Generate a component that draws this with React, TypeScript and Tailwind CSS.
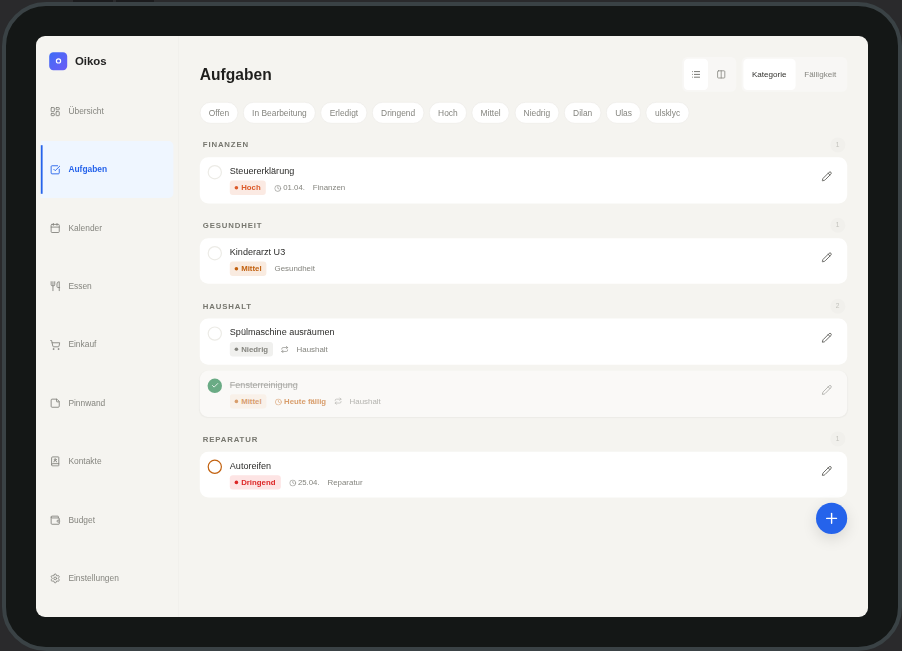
import React from "react";
import {
  LayoutDashboard, SquareCheckBig, Calendar, Utensils, ShoppingCart, StickyNote, BookUser, Wallet, Settings,
  Pencil, List, Columns2, Clock, Repeat, Check, Plus,
} from "lucide-react";

const nav = [
  { label: "Übersicht", Icon: LayoutDashboard },
  { label: "Aufgaben", Icon: SquareCheckBig, active: true },
  { label: "Kalender", Icon: Calendar },
  { label: "Essen", Icon: Utensils },
  { label: "Einkauf", Icon: ShoppingCart },
  { label: "Pinnwand", Icon: StickyNote },
  { label: "Kontakte", Icon: BookUser },
  { label: "Budget", Icon: Wallet },
  { label: "Einstellungen", Icon: Settings },
];

const chips = ["Offen", "In Bearbeitung", "Erledigt", "Dringend", "Hoch", "Mittel", "Niedrig", "Dilan", "Ulas", "ulsklyc"];

const prio: Record<string, { wrap: string; dot: string }> = {
  Hoch: { wrap: "bg-[#fbeae3] text-[#dc5a2a]", dot: "bg-[#dc5a2a]" },
  Mittel: { wrap: "bg-[#f9ebe0] text-[#c2610f]", dot: "bg-[#c2610f]" },
  Niedrig: { wrap: "bg-[#f0f0ee] text-[#85857f]", dot: "bg-[#85857f]" },
  Dringend: { wrap: "bg-[#fde4e4] text-[#dc2626]", dot: "bg-[#dc2626]" },
};

function Badge({ p }: { p: string }) {
  return (
    <span className={`flex h-[24px] items-center gap-[5px] rounded-[5px] pl-[8px] pr-[8.5px] text-[13px] font-bold ${prio[p].wrap}`}>
      <span className={`h-[6px] w-[6px] rounded-full ${prio[p].dot}`} />
      {p}
    </span>
  );
}

type Task = {
  title: string; p: string; date?: string; today?: boolean; repeat?: boolean; cat: string; done?: boolean; urgent?: boolean;
};

function Card({ t }: { t: Task }) {
  return (
    <div className={`flex h-[76.67px] rounded-[14px] pl-[13px] pr-[25px] pt-[13px] ${t.done ? "bg-[#faf9f7] shadow-[0_1px_2px_rgba(0,0,0,0.04)]" : "bg-white"}`}>
      {t.done ? (
        <span className="flex h-[24px] w-[24px] shrink-0 items-center justify-center rounded-full bg-[#6aab85]">
          <Check size={13} strokeWidth={2.5} className="text-white" />
        </span>
      ) : (
        <span className={`h-[24px] w-[24px] shrink-0 rounded-full ${t.urgent ? "border-[2px] border-[#c2610f]" : "border-[2px] border-[#ecebe6]"}`} />
      )}
      <div className="ml-[13px] flex-1">
        <div className={`text-[15.1px] leading-[20px] ${t.done ? "text-[#a8a8a4] line-through" : "text-[#2c2c2a]"}`}>{t.title}</div>
        <div className={`mt-[6px] flex items-center ${t.done ? "opacity-60" : ""}`}>
          <Badge p={t.p} />
          {t.date && (
            <span className="ml-[14px] flex items-center gap-[3px] text-[13px] text-[#85857f]">
              <Clock size={12} strokeWidth={2} className="mt-[2px]" />
              {t.date}
            </span>
          )}
          {t.today && (
            <span className="ml-[14px] flex items-center gap-[3px] text-[13px] font-bold text-[#c2610f]">
              <Clock size={12} strokeWidth={2} className="mt-[2px]" />
              Heute fällig
            </span>
          )}
          {t.repeat && <Repeat size={13} strokeWidth={2} className="ml-[13px] text-[#85857f]" />}
          <span className="ml-[13px] text-[13.2px] text-[#85857f]">{t.cat}</span>
        </div>
      </div>
      <Pencil size={18} strokeWidth={2} className={`mt-[10px] ${t.done ? "text-[#b0b0ac]" : "text-[#5c5c58]"}`} />
    </div>
  );
}

function Section({ name, count, tasks }: { name: string; count: number; tasks: Task[] }) {
  return (
    <section className="mt-[26px] first-of-type:mt-[24px]">
      <div className="flex h-[22px] items-center justify-between pl-[5px] pr-[3px]">
        <span className="text-[13px] font-bold tracking-[1.4px] text-[#77776f]">{name}</span>
        <span className="flex h-[25px] w-[25px] items-center justify-center rounded-full bg-[#f1f0ec] text-[11px] text-[#c2c2bc]">{count}</span>
      </div>
      <div className="mt-[10px] flex flex-col gap-[10px]">
        {tasks.map((t) => <Card key={t.title} t={t} />)}
      </div>
    </section>
  );
}

export default function App() {
  return (
    <div className="relative h-[651px] w-[902px] overflow-hidden bg-[#2a2a2c] font-['Liberation_Sans',sans-serif]">
      <span className="absolute left-[73px] top-0 h-[2px] w-[40px] bg-[#1b1b1d]" />
      <span className="absolute left-[116px] top-0 h-[2px] w-[38px] bg-[#1b1b1d]" />
      <div className="absolute left-[2px] top-[2px] h-[649px] w-[900px] rounded-[44px] border-[4px] border-[#3a4245] bg-[#141716] p-[30px]">
        <div className="h-[581px] w-[832px] overflow-hidden rounded-[9px] bg-[#f5f4f0]">
          <div className="relative flex h-[968.33px] w-[1386.67px] origin-top-left scale-[0.6]">
            <aside className="w-[238px] shrink-0 border-r border-[#eeede9]">
              <div className="flex items-center pl-[22px] pt-[27px]">
                <span className="flex h-[30px] w-[30px] items-center justify-center rounded-[7px] bg-gradient-to-br from-[#3b6cf6] to-[#6a5cf6]">
                  <span className="mb-[2px] h-[9px] w-[9px] rounded-full border-[2px] border-white" />
                </span>
                <span className="ml-[13px] text-[19px] font-bold text-[#222]">Oikos</span>
              </div>
              <nav className="mt-[21px] flex flex-col gap-[2.33px] px-[8px]">
                {nav.map(({ label, Icon, active }) => (
                  <div key={label} className={`relative flex h-[95px] items-center pl-[15px] ${active ? "rounded-r-[8px] bg-[#eff6ff] text-[#2563eb]" : "text-[#85857f]"}`}>
                    {active && <span className="absolute bottom-[7px] left-0 top-[7px] w-[3px] bg-[#2563eb]" />}
                    <Icon size={18} strokeWidth={2} />
                    <span className={`ml-[13px] text-[14px] ${active ? "font-bold" : ""}`}>{label}</span>
                  </div>
                ))}
              </nav>
            </aside>
            <main className="relative flex-1 px-[35px] pt-[35px]">
              <header className="flex h-[58px] items-center">
                <h1 className="flex-1 text-[26px] font-bold text-[#1f1f1d]">Aufgaben</h1>
                <div className="flex h-[58px] w-[90px] rounded-[9px] bg-[#f8f7f5] p-[3px]">
                  <span className="flex h-[52px] w-[40px] items-center justify-center rounded-[7px] bg-white">
                    <List size={16} strokeWidth={2} className="text-[#55554f]" />
                  </span>
                  <span className="flex h-[52px] w-[44px] items-center justify-center">
                    <Columns2 size={16} strokeWidth={2} className="text-[#85857f]" />
                  </span>
                </div>
                <div className="ml-[9px] flex h-[58px] w-[176px] rounded-[9px] bg-[#f8f7f5] p-[3px] text-[13.5px]">
                  <span className="flex h-[52px] w-[87px] items-center justify-center rounded-[7px] bg-white text-[#33332f]">Kategorie</span>
                  <span className="flex h-[52px] w-[83px] items-center justify-center text-[#85857f]">Fälligkeit</span>
                </div>
              </header>
              <div className="mt-[17px] flex gap-[8.2px]">
                {chips.map((c) => (
                  <span key={c} className="flex h-[36px] items-center rounded-full border border-[#ebeae6] bg-white px-[14px] text-[14px] text-[#85857f]">{c}</span>
                ))}
              </div>
              <Section name="FINANZEN" count={1} tasks={[
                { title: "Steuererklärung", p: "Hoch", date: "01.04.", cat: "Finanzen" },
              ]} />
              <Section name="GESUNDHEIT" count={1} tasks={[
                { title: "Kinderarzt U3", p: "Mittel", cat: "Gesundheit" },
              ]} />
              <Section name="HAUSHALT" count={2} tasks={[
                { title: "Spülmaschine ausräumen", p: "Niedrig", repeat: true, cat: "Haushalt" },
                { title: "Fensterreinigung", p: "Mittel", today: true, repeat: true, cat: "Haushalt", done: true },
              ]} />
              <Section name="REPARATUR" count={1} tasks={[
                { title: "Autoreifen", p: "Dringend", date: "25.04.", cat: "Reparatur", urgent: true },
              ]} />
              <button className="absolute left-[1062px] top-[778px] flex h-[52px] w-[52px] items-center justify-center rounded-full bg-[#2563eb] text-white shadow-[0_8px_24px_rgba(0,0,0,0.12)]">
                <Plus size={28} strokeWidth={2} />
              </button>
            </main>
          </div>
        </div>
      </div>
    </div>
  );
}
